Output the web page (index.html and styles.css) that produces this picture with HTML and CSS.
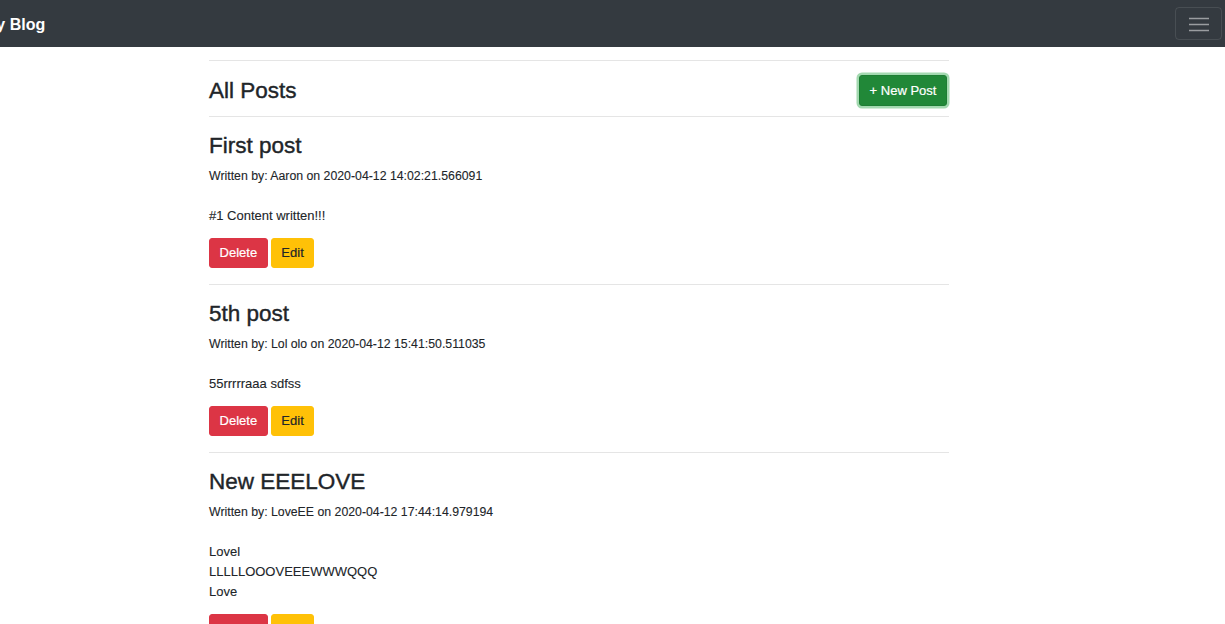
FILE: index.html
```html
<!DOCTYPE html>
<html lang="en">
<head>
<meta charset="utf-8">
<title>My Blog</title>
<link rel="stylesheet" href="styles.css">
</head>
<body>
<nav class="navbar">
  <a class="brand" href="#">My Blog</a>
  <button class="toggler" type="button" aria-label="Toggle navigation">
    <svg width="20" height="16" viewBox="0 0 20 16" aria-hidden="true">
      <path d="M0 2.5h20M0 8.5h20M0 14.5h20" stroke="rgba(255,255,255,0.5)" stroke-width="1.6" fill="none"/>
    </svg>
  </button>
</nav>
<main class="content">
  <hr class="rule">
  <div class="page-head">
    <h2 class="page-title">All Posts</h2>
    <a class="btn btn-success btn-focus" href="#">+ New Post</a>
  </div>
  <hr class="rule">
  <article class="post">
    <h3 class="post-title">First post</h3>
    <p class="post-meta">Written by: Aaron on 2020-04-12 14:02:21.566091</p>
    <p class="post-body">#1 Content written!!!</p>
    <div class="actions">
      <a class="btn btn-danger" href="#">Delete</a>
      <a class="btn btn-warning" href="#">Edit</a>
    </div>
  </article>
  <hr class="rule">
  <article class="post">
    <h3 class="post-title">5th post</h3>
    <p class="post-meta">Written by: Lol olo on 2020-04-12 15:41:50.511035</p>
    <p class="post-body">55rrrrraaa sdfss</p>
    <div class="actions">
      <a class="btn btn-danger" href="#">Delete</a>
      <a class="btn btn-warning" href="#">Edit</a>
    </div>
  </article>
  <hr class="rule">
  <article class="post">
    <h3 class="post-title">New EEELOVE</h3>
    <p class="post-meta">Written by: LoveEE on 2020-04-12 17:44:14.979194</p>
    <p class="post-body">Lovel<br>LLLLLOOOVEEEWWWQQQ<br>Love</p>
    <div class="actions">
      <a class="btn btn-danger" href="#">Delete</a>
      <a class="btn btn-warning" href="#">Edit</a>
    </div>
  </article>
</main>
</body>
</html>
```

FILE: styles.css
```css
html, body {
  margin: 0;
  padding: 0;
  background: #fff;
}
body {
  font-family: "Liberation Sans", Arial, sans-serif;
  color: #212529;
  font-size: 13px;
  line-height: 20px;
  overflow: hidden;
}
.navbar {
  height: 47px;
  background: #343a40;
  display: flex;
  align-items: center;
  justify-content: space-between;
  padding-right: 3px;
  box-sizing: border-box;
}
.brand {
  color: #fff;
  text-decoration: none;
  font-weight: 700;
  font-size: 16px;
  line-height: 20px;
  padding-top: 2px;
  margin-left: -17px;
}
.toggler {
  width: 47px;
  height: 33px;
  box-sizing: border-box;
  background: transparent;
  border: 1px solid rgba(255,255,255,0.1);
  border-radius: 4px;
  padding: 0;
  display: flex;
  align-items: center;
  justify-content: center;
}
.content {
  width: 740px;
  margin-left: 209px;
  padding-top: 13px;
}
.rule {
  margin: 0;
  border: 0;
  border-top: 1px solid rgba(0,0,0,0.1);
}
.page-head {
  display: flex;
  align-items: center;
  justify-content: space-between;
  padding: 13px 2px 10px 0;
}
.page-title {
  margin: 0;
  padding-top: 2px;
  font-size: 22.5px;
  line-height: 30px;
  font-weight: 400;
  -webkit-text-stroke: 0.4px currentColor;
}
.post {
  padding: 15px 0 16px;
}
.post-title {
  margin: 0 0 7px;
  font-size: 22.5px;
  line-height: 27px;
  font-weight: 400;
  -webkit-text-stroke: 0.4px currentColor;
}
.post-meta {
  margin: 0 0 20px;
  font-size: 12.3px;
  -webkit-text-stroke: 0.1px currentColor;
}
.post-body {
  margin: 0 0 12px;
  -webkit-text-stroke: 0.1px currentColor;
}
.actions {
  display: flex;
  gap: 3px;
}
.btn {
  display: inline-block;
  box-sizing: border-box;
  height: 30px;
  line-height: 28px;
  padding: 0 9.6px;
  border: 1px solid transparent;
  border-radius: 3px;
  text-decoration: none;
  font-size: 13px;
  -webkit-text-stroke: 0.2px currentColor;
}
.btn-success {
  background: #218838;
  border-color: #1e7e34;
  color: #fff;
  height: 31px;
  line-height: 29px;
}
.btn-focus {
  box-shadow: 0 0 0 2.5px rgba(72,180,97,0.5);
}
.btn-danger {
  background: #dc3545;
  border-color: #dc3545;
  color: #fff;
}
.btn-warning {
  background: #ffc107;
  border-color: #ffc107;
  color: #212529;
}
```
